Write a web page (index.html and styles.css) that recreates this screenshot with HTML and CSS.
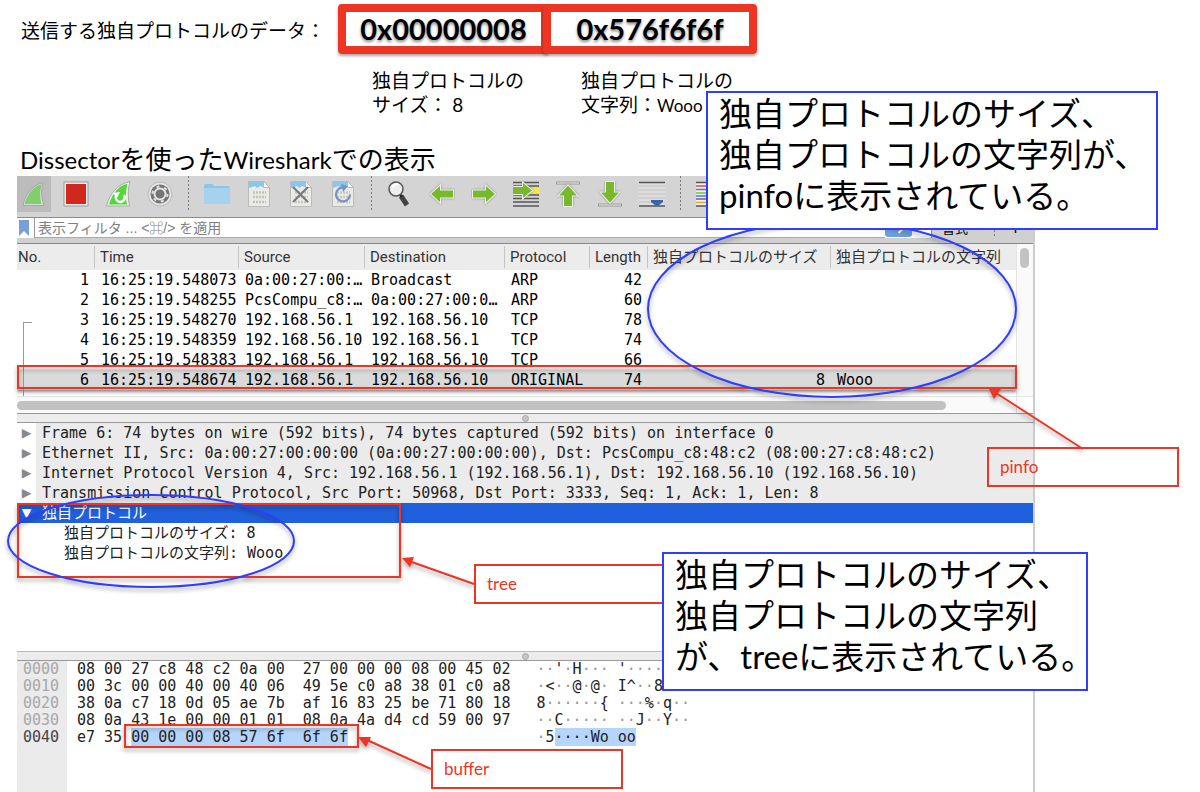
FILE: index.html
```html
<!DOCTYPE html>
<html lang="ja">
<head>
<meta charset="utf-8">
<title>Dissectorを使ったWiresharkでの表示</title>
<link rel="stylesheet" href="styles.css">
</head>
<body>
<main class="slide">
  <section class="payload">
    <p class="payload-label">送信する独自プロトコルのデータ：</p>
    <div class="value value-size">0x00000008</div>
    <div class="value">0x576f6f6f</div>
    <p class="caption caption-size">独自プロトコルの<br>サイズ： 8</p>
    <p class="caption caption-text">独自プロトコルの<br>文字列：<span class="latin">Wooo</span></p>
  </section>

  <h1 class="title"><span class="latin">Dissector</span>を使った<span class="latin">Wireshark</span>での表示</h1>

  <section class="window">
    <div class="toolbar">
      <button class="tool tool-on" aria-label="キャプチャ開始"><svg viewBox="0 0 26 26"><path d="M2 24.500C4 14 11 4 22.500 1.500 19.500 9 20.500 17 23 24.500Z" fill="#ddd" stroke="#a5a5a5"/><path d="M3.500 23C6.500 13 12 5.500 21 3 18.500 10 19 17 20.500 23Z" fill="#7fd06c"/></svg></button>
      <button class="tool" aria-label="キャプチャ停止"><svg viewBox="0 0 26 26"><rect x="1" y="1" width="24" height="24" fill="#eee" stroke="#999"/><rect x="3" y="3" width="20" height="20" fill="#d0281c"/></svg></button>
      <button class="tool" aria-label="キャプチャ再開"><svg viewBox="0 0 26 26"><path d="M1.500 25C4 14 12 3 25 .5 22.500 8 23 18 24.500 25Z" fill="#f2f2f2" stroke="#aaa"/><path d="M4 23.500C7 13 13 5 22.500 2.500 20.500 10 20.500 17 22 23.500Z" fill="#55d83b"/><path d="M11 15a4.500 4.500 0 1 0 8-1" fill="none" stroke="#fff" stroke-width="2.500"/><path d="M8 12l7-1-3 6z" fill="#fff"/></svg></button>
      <button class="tool" aria-label="オプション"><svg viewBox="0 0 26 26"><circle cx="13" cy="13" r="12" fill="#e3e3e3" stroke="#bbb"/><circle cx="13" cy="13" r="9.500" fill="#747474"/><circle cx="13" cy="13" r="5.500" fill="none" stroke="#e5e5e5" stroke-width="2"/><circle cx="13" cy="13" r="7.500" fill="none" stroke="#e5e5e5" stroke-width="2" stroke-dasharray="2.900 5"/><circle cx="13" cy="13" r="3" fill="#777"/></svg></button>
      <span class="sep"></span>
      <button class="tool" aria-label="開く"><svg viewBox="0 0 26 26"><path d="M0 5q0-2 2-2h6l2 2h14q2 0 2 2v15q0 1-1 1H1q-1 0-1-1z" fill="#8fc4e4"/><path d="M0 7h26v15q0 1-1 1H1q-1 0-1-1z" fill="#a5d2ec"/></svg></button>
      <button class="tool" aria-label="保存"><svg viewBox="0 0 26 26"><path d="M2.500.5h15l6 6v19h-21z" fill="#ebebe6" stroke="#bbb"/><path d="M3 1h14v5l-3-1-3 2-2-2-6 2z" fill="#8cc7e8"/><path d="M17.500.5v6h6z" fill="#fafafa" stroke="#bbb"/><g stroke="#c2c2bd" stroke-width="2.500" stroke-dasharray="2 1"><path d="M7 11.500h13M7 16h13M7 21h13"/></g></svg></button>
      <button class="tool" aria-label="閉じる"><svg viewBox="0 0 26 26"><path d="M2.500.5h15l6 6v19h-21z" fill="#ebebe6" stroke="#bbb"/><path d="M3 1h14v5l-3-1-3 2-2-2-6 2z" fill="#8cc7e8"/><path d="M17.500.5v6h6z" fill="#fafafa" stroke="#bbb"/><g stroke="#c8c8c2" stroke-width="2.500" stroke-dasharray="2 1"><path d="M7 11.500h13M7 16h13M7 21h13"/></g><path d="M5 6l15 15M20 6L5 21" stroke="#777b80" stroke-width="2.200"/></svg></button>
      <button class="tool" aria-label="再読み込み"><svg viewBox="0 0 26 26"><path d="M2.500.5h15l6 6v19h-21z" fill="#ebebe6" stroke="#bbb"/><path d="M3 1h14v5l-3-1-3 2-2-2-6 2z" fill="#8cc7e8"/><path d="M17.500.5v6h6z" fill="#fafafa" stroke="#bbb"/><g stroke="#c8c8c2" stroke-width="2.500" stroke-dasharray="2 1"><path d="M7 11.500h13M7 16h13M7 21h13"/></g><path d="M12 6.500a7 7 0 1 0 8 7" fill="none" stroke="#7894c4" stroke-width="2.300"/><path d="M11 3l7 2-5 6z" fill="#7894c4"/></svg></button>
      <span class="sep"></span>
      <button class="tool" aria-label="検索"><svg viewBox="0 0 26 26"><path d="M14 15l6 9" stroke="#444" stroke-width="5"/><path d="M12 12l3 4" stroke="#222" stroke-width="2.500"/><circle cx="9" cy="8" r="7" fill="#eee" stroke="#555" stroke-width="1.500"/><path d="M5 7q2-4 6-4" stroke="#fff" fill="none" stroke-width="2"/></svg></button>
      <button class="tool" aria-label="前へ"><svg viewBox="0 0 26 26"><path class="arrow" d="M2 13l9-8v4.500h13v7H11V21z"/></svg></button>
      <button class="tool" aria-label="次へ"><svg viewBox="0 0 26 26"><path class="arrow" d="M24 13l-9-8v4.500H2v7h13V21z"/></svg></button>
      <button class="tool" aria-label="指定パケットへ"><svg viewBox="0 0 26 26"><path d="M0 1.500h26M0 5h26M0 14h26M0 17.500h26M0 21h26M0 25h26" stroke="#555" stroke-width="1.500"/><path d="M18 7h8v5h-8z" fill="#f8e649"/><path class="arrow" d="M19 9.500L10 2v4H0v7h10v4z"/></svg></button>
      <button class="tool" aria-label="先頭へ"><svg viewBox="0 0 26 26"><path d="M1 2h24" stroke="#999" stroke-width="3"/><path d="M2 2h22" stroke="#eee"/><path class="arrow" d="M13 4.500l9 10h-5V25H9V14.500H4z"/></svg></button>
      <button class="tool" aria-label="末尾へ"><svg viewBox="0 0 26 26"><path d="M1 24h24" stroke="#999" stroke-width="3"/><path d="M2 24h22" stroke="#eee"/><path class="arrow" d="M13 21.500l9-10h-5V1H9v10.500H4z"/></svg></button>
      <button class="tool" aria-label="自動スクロール"><svg viewBox="0 0 26 26"><path d="M0 1h26v24H0z" fill="#ddd"/><path d="M0 5h26M0 9h26M0 13h26M0 17h26M0 21h26" stroke="#c2c2c2"/><path d="M0 1.500h26M0 25h26" stroke="#555" stroke-width="1.500"/><path d="M12 19h12v2l-5 4h-2l-5-4z" fill="#3866a8"/></svg></button>
      <span class="sep"></span>
      <button class="tool" aria-label="色分け"><svg viewBox="0 0 26 26"><path d="M0 1h26v24H0z" fill="#eee"/><path d="M0 1.500h26M0 25h26" stroke="#555" stroke-width="1.500"/><path d="M0 5h26" stroke="#e3483d" stroke-width="1.500"/><path d="M0 8.500h26" stroke="#4a7fc8" stroke-width="1.500"/><path d="M0 12h26" stroke="#6cc93c" stroke-width="1.500"/><path d="M0 15h26" stroke="#4a7fc8" stroke-width="1.500"/><path d="M0 18h26" stroke="#78589a" stroke-width="1.500"/><path d="M0 21.500h26" stroke="#e2a929" stroke-width="1.500"/></svg></button>
    </div>

    <div class="filterbar">
      <button class="bookmark" aria-label="ブックマーク"><svg viewBox="0 0 10 16"><path d="M0 0h10v16l-5-5-5 5z" fill="#76a0d6"/></svg></button>
      <input class="filter" type="text" aria-label="表示フィルタ" placeholder="表示フィルタ ... &lt;⌘/&gt; を適用">
      <button class="apply" aria-label="適用"><svg viewBox="0 0 26 18"><path d="M6 9h12M13 4l5 5-5 5" stroke="#fff" stroke-width="2" fill="none"/></svg></button>
      <button class="format">書式…</button>
      <span class="sep"></span>
      <button class="plus">+</button>
    </div>

    <div class="list">
      <div class="list-clip">
      <table class="packets">
        <colgroup><col class="c-no"><col class="c-time"><col class="c-src"><col class="c-dst"><col class="c-proto"><col class="c-len"><col class="c-size"><col></colgroup>
        <thead><tr><th>No.</th><th>Time</th><th>Source</th><th>Destination</th><th>Protocol</th><th>Length</th><th>独自プロトコルのサイズ</th><th>独自プロトコルの文字列</th></tr></thead>
        <tbody>
          <tr><td class="num">1</td><td>16:25:19.548073</td><td>0a:00:27:00:…</td><td>Broadcast</td><td>ARP</td><td class="num">42</td><td></td><td></td></tr>
          <tr><td class="num">2</td><td>16:25:19.548255</td><td>PcsCompu_c8:…</td><td>0a:00:27:00:0…</td><td>ARP</td><td class="num">60</td><td></td><td></td></tr>
          <tr class="talk-first"><td class="num">3</td><td>16:25:19.548270</td><td>192.168.56.1</td><td>192.168.56.10</td><td>TCP</td><td class="num">78</td><td></td><td></td></tr>
          <tr class="talk"><td class="num">4</td><td>16:25:19.548359</td><td>192.168.56.10</td><td>192.168.56.1</td><td>TCP</td><td class="num">74</td><td></td><td></td></tr>
          <tr class="talk"><td class="num">5</td><td>16:25:19.548383</td><td>192.168.56.1</td><td>192.168.56.10</td><td>TCP</td><td class="num">66</td><td></td><td></td></tr>
          <tr class="talk current"><td class="num">6</td><td>16:25:19.548674</td><td>192.168.56.1</td><td>192.168.56.10</td><td>ORIGINAL</td><td class="num">74</td><td class="num">8</td><td>Wooo</td></tr>
          <tr class="talk"><td></td><td></td><td></td><td></td><td></td><td></td><td></td><td></td></tr>
        </tbody>
      </table>
      </div>
      <div class="vscroll"><div class="vthumb"></div></div>
      <div class="hscroll"><div class="hthumb"></div></div>
      <div class="corner"></div>
    </div>

    <div class="splitter"><i class="grip"></i></div>

    <ul class="tree">
      <li class="node"><span class="twist">▶</span><span class="node-text">Frame 6: 74 bytes on wire (592 bits), 74 bytes captured (592 bits) on interface 0</span></li>
      <li class="node"><span class="twist">▶</span><span class="node-text">Ethernet II, Src: 0a:00:27:00:00:00 (0a:00:27:00:00:00), Dst: PcsCompu_c8:48:c2 (08:00:27:c8:48:c2)</span></li>
      <li class="node"><span class="twist">▶</span><span class="node-text">Internet Protocol Version 4, Src: 192.168.56.1 (192.168.56.1), Dst: 192.168.56.10 (192.168.56.10)</span></li>
      <li class="node"><span class="twist">▶</span><span class="node-text">Transmission Control Protocol, Src Port: 50968, Dst Port: 3333, Seq: 1, Ack: 1, Len: 8</span></li>
      <li class="node selected"><span class="twist">▼</span><span class="node-text">独自プロトコル</span></li>
      <li class="leaf">独自プロトコルのサイズ: 8</li>
      <li class="leaf">独自プロトコルの文字列: Wooo</li>
    </ul>

    <div class="splitter"><i class="grip"></i></div>

    <div class="bytes">
<pre class="offsets">0000
0010
0020
0030
<span class="offset-on">0040</span></pre>
<pre class="hex">08 00 27 c8 48 c2 0a 00  27 00 00 00 08 00 45 02
00 3c 00 00 40 00 40 06  49 5e c0 a8 38 01 c0 a8
38 0a c7 18 0d 05 ae 7b  af 16 83 25 be 71 80 18
08 0a 43 1e 00 00 01 01  08 0a 4a d4 cd 59 00 97
e7 35 <mark>00 00 00 08 57 6f  6f 6f</mark></pre>
<pre class="ascii"><s>··</s>'<s>·</s>H<s>···</s> '<s>····</s>
<s>·</s>&lt;<s>··</s>@<s>·</s>@<s>·</s> I^<s>··</s>8
8<s>······</s>{ <s>···</s>%<s>·</s>q<s>··</s>
<s>··</s>C<s>·····</s> <s>··</s>J<s>··</s>Y<s>··</s>
<s>·</s>5<mark>····Wo oo</mark></pre>
    </div>
  </section>

  <svg class="marks" width="1200" height="792" viewBox="0 0 1200 792">
    <g fill="none" stroke="#ee3423" stroke-width="2">
      <rect x="18" y="366" width="998" height="22"/>
      <rect x="18" y="504" width="382" height="73"/>
      <rect x="125" y="725" width="233" height="22"/>
    </g>
    <g fill="none" stroke="#2f3dff" stroke-width="2">
      <ellipse cx="832" cy="309" rx="184" ry="88"/>
      <ellipse cx="151" cy="541" rx="143" ry="46"/>
    </g>
    <g stroke="#ee3423" stroke-width="2" fill="#ee3423">
      <path d="M1083 449L996 393M474 584L409 561M431 769L367 740"/>
      <path stroke="none" d="M988 387l13 2-7 10zM402 558l12-1-4 10zM358 737l13 0-5 10z"/>
    </g>
  </svg>
  <div class="tag tag-pinfo">pinfo</div>
  <div class="tag tag-tree">tree</div>
  <div class="tag tag-buffer">buffer</div>
  <div class="callout callout-pinfo">独自プロトコルのサイズ、<br>独自プロトコルの文字列が、<br><span class="latin">pinfo</span>に表示されている。</div>
  <div class="callout callout-tree">独自プロトコルのサイズ、<br>独自プロトコルの文字列<br>が、<span class="latin">tree</span>に表示されている。</div>
</main>
</body>
</html>
```
FILE: styles.css
```css
* { box-sizing: border-box; }
body { margin: 0; background: #fff; color: #000; font-family: Lato, "Noto Sans CJK JP", sans-serif; }
p, h1, ul, pre { margin: 0; padding: 0; }
button { border: 0; padding: 0; background: none; font: inherit; color: inherit; }
svg { display: block; }

.slide { position: relative; display: flex; flex-direction: column; min-height: 100vh; overflow: hidden; }

.payload { display: grid; grid-template-columns: 317px 205px 214px; padding: 4px 0 0 21px; row-gap: 15px; }
.payload-label { align-self: center; padding-top: 3px; font-size: 19px; line-height: 24px; white-space: nowrap; }
.value { height: 50px; border: 8px solid #ee3423; border-radius: 4px; text-align: center; font-size: 29px; font-weight: 700; line-height: 34px; box-shadow: 0 2px 3px rgba(0,0,0,.35); text-shadow: 0 2px 3px rgba(0,0,0,.45); }
.value-size { margin-right: -6px; }
.caption { font-size: 19px; line-height: 24px; white-space: nowrap; }
.caption-size { grid-column: 2; padding-left: 34px; }
.caption-text { padding-left: 38px; }
.caption .latin { font-size: 17px; }

.title { margin: 25px 0 0 20px; font-size: 26px; font-weight: 400; line-height: 32px; white-space: nowrap; }
.title .latin { font-size: 24px; }

.window { flex: 1; display: flex; flex-direction: column; margin: 0 165px 0 17px; border-right: 2px solid #ccc; }

.toolbar { display: flex; gap: 8px; height: 42px; background: #d4d4d4; border-bottom: 1px solid #8c8c8c; }
.tool { flex: 0 0 34px; height: 36px; display: grid; place-items: center; }
.tool svg { width: 26px; height: 26px; }
.tool-on { background: #bcbcbc; }
.arrow { fill: #79b82c; stroke: #eef3e6; stroke-width: 2; paint-order: stroke; filter: drop-shadow(0 0 1px #888); }
.sep { flex: 0 0 7px; height: 35px; background: linear-gradient(#777, #777) center / 1px 100% no-repeat; mask: repeating-linear-gradient(#000 0 2px, transparent 2px 4px); }

.filterbar { display: flex; height: 26px; padding-bottom: 5px; background: #d0d0d0; border-bottom: 1px solid #888; }
.bookmark { width: 18px; background: #fff; border-right: 1px solid #999; padding: 2px 6px 2px 2px; }
.bookmark svg { width: 10px; height: 16px; }
.filter { flex: 1; min-width: 0; border: 0; border-bottom: 1px solid #aaa; padding: 0 3px; background: #fff; font-family: "Liberation Sans", "Noto Sans CJK JP", "DejaVu Sans", sans-serif; font-size: 14px; }
.filter::placeholder { color: #808080; }
.apply { width: 47px; padding-right: 20px; background: #fff; border-right: 1px solid #888; }
.apply svg { width: 27px; height: 18px; background: #6f9fd8; border-radius: 3px; }
.format { width: 59px; font-family: "Noto Sans CJK JP", sans-serif; font-size: 13px; line-height: 18px; }
.filterbar .sep { height: 20px; }
.plus { width: 35px; font-size: 18px; line-height: 20px; }

.list { display: grid; grid-template-columns: 1fr 17px; grid-template-rows: 152px 17px; border-bottom: 1px solid #999; }
.list-clip { overflow: hidden; }
.packets { width: 100%; table-layout: fixed; border-collapse: collapse; font: 15px/20px "DejaVu Sans Mono", "Noto Sans CJK JP", monospace; color: #000; }
.packets th { height: 26px; padding: 0 0 0 5px; background: linear-gradient(#c4c4c4, #c4c4c4) right center / 1px 22px no-repeat #ececec; font: 15px/26px Roboto, "Noto Sans CJK JP", sans-serif; color: #333; text-align: left; white-space: nowrap; }
.packets th:first-child { padding-left: 1px; }
.packets th:last-child { background: #ececec; }
.packets td { height: 20px; padding: 0 6px; white-space: nowrap; }
.packets .num { text-align: right; }
.c-no { width: 78px; }
.c-time { width: 144px; }
.c-src { width: 126px; }
.c-dst { width: 140px; }
.c-proto { width: 85px; }
.c-len { width: 58px; }
.c-size { width: 183px; }
.talk td:first-child { background: linear-gradient(#999, #999) 6px 0 / 1px 100% no-repeat; }
.talk-first td:first-child { background: linear-gradient(#999, #999) 6px 12px / 1px 100% no-repeat, linear-gradient(#999, #999) 6px 12px / 9px 1px no-repeat; }
.current { background: #dadada; box-shadow: 0 1px 3px rgba(0,0,0,.5); }
.vscroll { background: #fafafa; border-left: 1px solid #e4e4e4; padding: 4px 3px; }
.vthumb { height: 20px; width: 9px; border-radius: 5px; background: #c2c2c2; }
.hscroll { background: #fafafa; border-top: 1px solid #e4e4e4; padding-top: 4px; }
.hthumb { width: 93%; height: 9px; border-radius: 5px; background: #c1c1c1; }
.corner { border-top: 1px solid #e4e4e4; border-left: 1px solid #e4e4e4; }

.splitter { flex: none; height: 9px; display: grid; place-items: center; background: #ececec; border-bottom: 1px solid #999; }
.grip { width: 7px; height: 7px; border-radius: 50%; background: #c6c6c6; border: 1px solid #aaa; }

.tree { height: 229px; border-bottom: 1px solid #bbb; list-style: none; font: 15px/20px "DejaVu Sans Mono", "Noto Sans CJK JP", monospace; color: #222; }
.node { display: flex; height: 20px; }
.twist { width: 19px; text-align: center; font-size: 16px; color: #888; }
.node-text { flex: 1; min-width: 0; padding-left: 6px; background: #ebebeb; white-space: nowrap; }
.selected, .selected .node-text { background: #2160dc; color: #fff; }
.selected .twist { color: #fff; }
.leaf { height: 20px; padding-left: 47px; white-space: nowrap; }

.bytes { flex: 1; display: flex; font-size: 15px; line-height: 17px; color: #222; }
.bytes pre { font-family: "DejaVu Sans Mono", monospace; }
.bytes .offsets { width: 50px; padding-left: 6px; background: #ebebeb; color: #a8a8a8; }
.bytes .offset-on { color: #444; }
.bytes .hex { padding-left: 10px; }
.bytes .ascii { padding-left: 26px; }
.ascii s { text-decoration: none; color: #999; }
mark { background: #b5d5fd; color: inherit; }

.marks { position: absolute; left: 0; top: 0; filter: drop-shadow(0 3px 2px rgba(0,0,0,.35)); pointer-events: none; }
.tag { position: absolute; width: 192px; height: 40px; padding-left: 11px; border: 2px solid #ee3423; color: #ee3423; font-size: 17px; line-height: 36px; }
.tag-pinfo { left: 987px; top: 447px; }
.tag-tree { left: 474px; top: 564px; }
.tag-buffer { left: 431px; top: 749px; }
.callout { position: absolute; height: 139px; padding-left: 11px; background: #fff; border: 2px solid #2f3dff; font-size: 33px; line-height: 41px; white-space: nowrap; }
.callout-pinfo { left: 706px; top: 91px; width: 452px; }
.callout-tree { left: 662px; top: 552px; width: 426px; }
```
